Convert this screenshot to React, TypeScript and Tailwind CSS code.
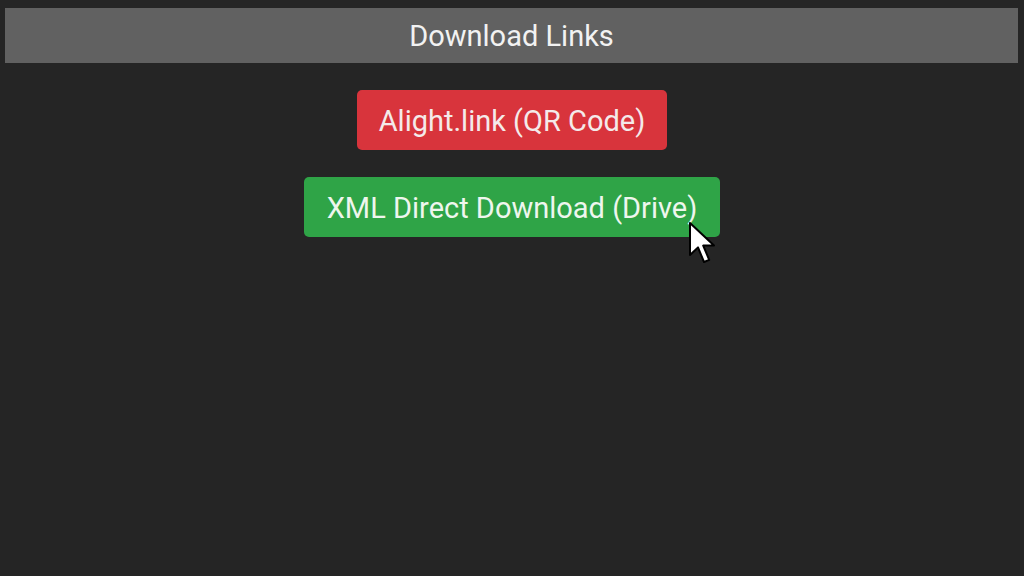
export default function App() {
  return (
    <div
      className="min-h-[576px] bg-[#252525] pt-2 px-[5px]"
      style={{ fontFamily: "Roboto, 'Liberation Sans', sans-serif" }}
    >
      <div className="h-[55px] mr-[1px] pt-[2px] bg-[#616161] flex items-center justify-center text-[29px] text-[#f2f2f2]">
        Download Links
      </div>

      <div className="flex flex-col items-center gap-[27px] pt-[27px]">
        <button className="h-[60px] px-[22px] pt-[4px] rounded-[5px] bg-[#d8343c] text-[29px] text-[#f4eaea]">
          Alight.link (QR Code)
        </button>
        <div className="relative">
          <button className="h-[60px] px-[23px] pt-[4px] rounded-[5px] bg-[#2fa447] text-[29px] text-[#eef6ee]">
            XML Direct Download (Drive)
          </button>
          {/* mouse pointer */}
          <svg
            className="absolute left-[384px] top-[44px]"
            width="30"
            height="44"
            viewBox="0 0 15 22"
          >
            <path
              d="M1 1 L1 17 L5 13.2 L8 20.5 L10.6 19.4 L7.6 12.3 L13 12.3 Z"
              fill="#ffffff"
              stroke="#000000"
              strokeWidth="1"
              strokeLinejoin="round"
            />
          </svg>
        </div>
      </div>
    </div>
  );
}
